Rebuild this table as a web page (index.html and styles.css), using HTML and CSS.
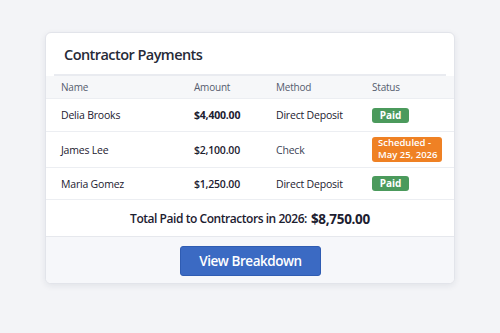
FILE: index.html
```html
<!DOCTYPE html>
<html>
<head>
<meta charset="utf-8">
<link rel="stylesheet" href="styles.css">
</head>
<body>
<div class="card">
  <div class="title">Contractor Payments</div>
  <div class="row head">
    <div>Name</div><div>Amount</div><div>Method</div><div>Status</div>
  </div>
  <div class="row r1">
    <div>Delia Brooks</div><div class="amt strong">$4,400.00</div><div>Direct Deposit</div><div><span class="badge paid">Paid</span></div>
  </div>
  <div class="row r2">
    <div>James Lee</div><div class="amt">$2,100.00</div><div class="muted">Check</div><div><span class="badge sched">Scheduled -<br>May 25, 2026</span></div>
  </div>
  <div class="row r3">
    <div>Maria Gomez</div><div class="amt">$1,250.00</div><div>Direct Deposit</div><div><span class="badge paid">Paid</span></div>
  </div>
  <div class="total">Total Paid to Contractors in 2026: <b>$8,750.00</b></div>
  <div class="footer"><button class="btn">View Breakdown</button></div>
</div>
</body>
</html>
```
FILE: styles.css
```css
html, body { margin: 0; padding: 0; }
body {
  background: #f3f4f7;
  font-family: "Open Sans", "Noto Sans", sans-serif;
  color: #1c2030;
  width: 500px;
  height: 333px;
  overflow: hidden;
}
.card {
  margin: 32px 0 0 45px;
  width: 408px;
  height: 250px;
  background: #fff;
  border: 1px solid #e2e4ea;
  border-radius: 6px;
  box-shadow: 0 2px 6px rgba(30, 40, 70, 0.08);
  overflow: hidden;
  display: flex;
  flex-direction: column;
}
.title {
  margin: 0 8px;
  padding-left: 10px;
  display: flex;
  align-items: center;
  font-size: 14.5px;
  font-weight: 600;
  letter-spacing: -0.55px;
  color: #262a38;
  border-bottom: 2px solid #e9ebf0;
  padding-top: 2px;
  box-sizing: border-box;
  height: 43px;
}
.row {
  display: grid;
  grid-template-columns: 133px 82px 96px 1fr;
  padding-left: 15px;
  align-items: center;
  font-size: 10.5px;
  letter-spacing: -0.2px;
  border-bottom: 1px solid #eceef2;
  box-sizing: border-box;
}
.head {
  height: 23px;
  background: #f6f7f9;
  color: #555c6e;
  font-size: 10px;
}
.r1 { height: 33px; }
.r2 { height: 36px; }
.r3 { height: 32px; }
.amt { font-weight: 600; }
.amt.strong { font-weight: 700; }
.muted { color: #3c4356; }
.badge {
  display: inline-block;
  color: #fff;
  font-weight: 700;
  font-size: 10px;
  border-radius: 3px;
  letter-spacing: -0.1px;
}
.paid {
  background: #4b9a5c;
  width: 37px;
  height: 15px;
  line-height: 15px;
  text-align: center;
}
.sched {
  background: #ef8124;
  width: 70px;
  box-sizing: border-box;
  padding: 0 0 0 6px;
  height: 25px;
  line-height: 12px;
  font-size: 9.5px;
  font-weight: 600;
  letter-spacing: 0;
}
.total {
  height: 37px;
  display: flex;
  align-items: center;
  justify-content: center;
  font-size: 12px;
  font-weight: 600;
  letter-spacing: -0.45px;
  border-bottom: 1px solid #e6e8ed;
  box-sizing: border-box;
  padding-top: 1px;
}
.total b { font-weight: 700; font-size: 13.5px; margin-left: 4px; letter-spacing: -0.3px; }
.footer {
  flex: 1;
  background: #f6f7fa;
  display: flex;
  justify-content: center;
  padding-top: 9px;
  box-sizing: border-box;
}
.btn {
  width: 141px;
  height: 30px;
  background: #3b6ac3;
  border: 1px solid #2f5cb2;
  border-radius: 3px;
  color: #fff;
  font-family: "Open Sans", "Noto Sans", sans-serif;
  font-size: 13.5px;
  font-weight: 600;
  letter-spacing: -0.45px;
  padding: 0;
  margin-left: 1px;
}
```
